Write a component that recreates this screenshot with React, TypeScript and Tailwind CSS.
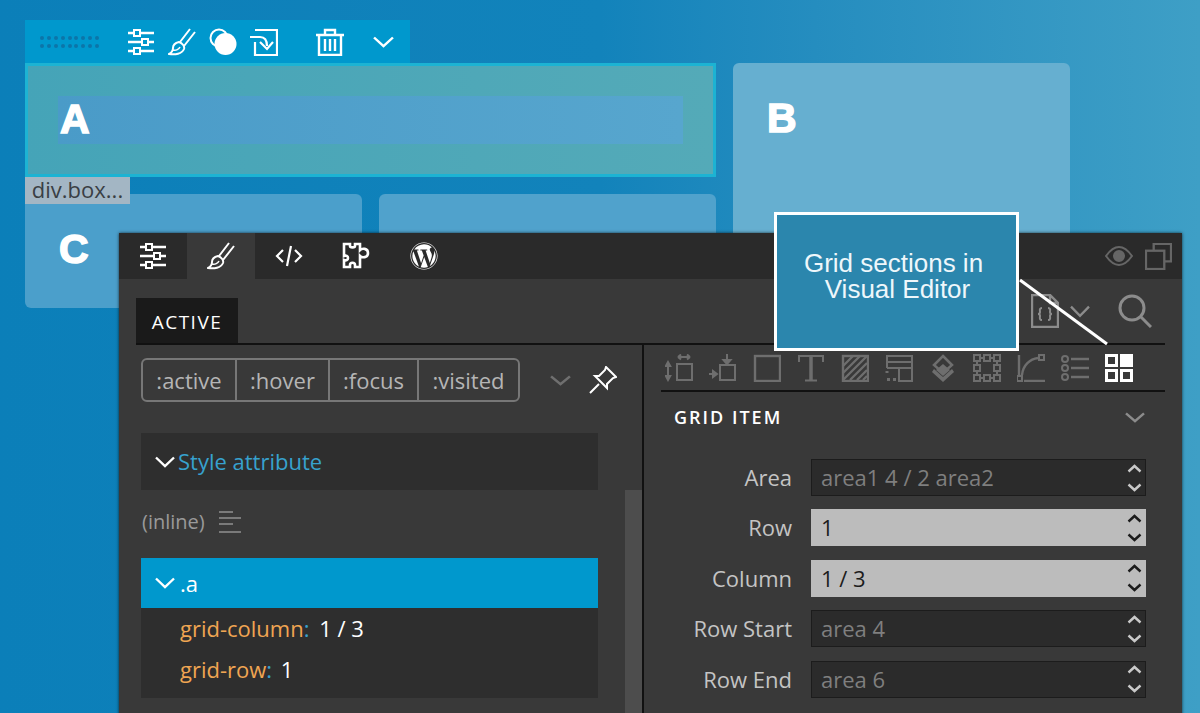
import { FaWordpress } from 'react-icons/fa';

const stroke = { fill: 'none', stroke: 'currentColor', strokeWidth: 2 };

function Sliders({ className }: { className?: string }) {
  return (
    <svg viewBox="0 0 28 28" className={className} {...stroke}>
      <path d="M1 5h6M13 5h14M1 14h14M21 14h6M1 23h6M13 23h14" strokeWidth="2.4" />
      <rect x="7" y="2" width="6" height="6" />
      <rect x="15" y="11" width="6" height="6" />
      <rect x="7" y="20" width="6" height="6" />
    </svg>
  );
}

function Brush({ className }: { className?: string }) {
  return (
    <svg viewBox="0 0 28 28" className={className} {...stroke}>
      <path d="M22 1 12 14M27 4 16 18" />
      <path d="M11 14c-4 1-6 3-6 6 0 3-2 5-4 6 6 1 13 0 15-5 1-3-2-6-5-7Z" />
      <path d="M5 22c3 1 6-1 7-3" strokeWidth="1.5" />
    </svg>
  );
}

function Puzzle({ className }: { className?: string }) {
  return (
    <svg viewBox="0 0 28 28" className={className} fill="none" stroke="currentColor" strokeWidth="2.6">
      <path d="M2 2h6v2c0 2 5 2 5 0V2h5v6c2-2 8-2 8 3s-6 5-8 3v11h-5v-2c0-3-5-3-5 0v2H2v-7c2 1 4 0 4-2s-2-3-4-2Z" />
    </svg>
  );
}

function Chevron({ className }: { className?: string }) {
  return (
    <svg viewBox="0 0 20 12" preserveAspectRatio="none" className={className} fill="none" stroke="currentColor" strokeWidth="2.4">
      <path d="M1 1.5 10 10l9-8.5" />
    </svg>
  );
}

function Spinner() {
  return (
    <svg viewBox="0 0 15 32" className="h-8 w-[15px]" fill="none" stroke="currentColor" strokeWidth="2.4">
      <path d="M1.500 9.500 7.500 4l6 5.500M1.500 22.500 7.500 28l6-5.500" />
    </svg>
  );
}

function ToolIcons() {
  return (
    <div className="flex h-[30px] items-center gap-[16px] text-[#6e6e6e]">
      <svg viewBox="0 0 28 28" className="h-[28px] w-[28px] shrink-0" {...stroke}>
        <path d="M13 3H25M13 3l3-2.500M13 3l3 2.500M25 3l-3-2.500M25 3l-3 2.500M3 8v18M3 8 .8 12h4.400ZM3 26 .8 22h4.400Z" />
        <rect x="12" y="10" width="15" height="16" />
      </svg>
      <svg viewBox="0 0 28 28" className="h-[28px] w-[28px] shrink-0" {...stroke}>
        <path d="M18 0v9M18 10l-3.500-4h7ZM0 20h7M8 20l-4-3v6Z" fill="currentColor" />
        <rect x="11" y="11" width="15" height="15" />
      </svg>
      <svg viewBox="0 0 28 28" className="h-[28px] w-[28px] shrink-0" {...stroke}>
        <rect x="2" y="2" width="25" height="25" strokeWidth="2.400" />
      </svg>
      <svg viewBox="0 0 28 28" className="h-[28px] w-[28px] shrink-0" {...stroke}>
        <path d="M2 8V2h24v6" strokeWidth="2" />
        <path d="M14 2v24" strokeWidth="3.500" />
        <path d="M8 26.500h12" strokeWidth="2" />
      </svg>
      <svg viewBox="0 0 28 28" className="h-[28px] w-[28px] shrink-0" fill="none" stroke="currentColor" strokeWidth="2.400">
        <rect x="2" y="2" width="25" height="25" />
        <path d="M2 12 12 2M2 19 19 2M2 26 26 2M9 26 26 9M16 26l10-10M22 26l4-4" />
      </svg>
      <svg viewBox="0 0 28 28" className="h-[28px] w-[28px] shrink-0" {...stroke}>
        <path d="M2 14V2h25v12M2 8h25M14 14h13v13H14ZM14 14H2" />
        <path d="M2 17v2M2 25.500h3M8 25.500h3" strokeWidth="3" />
      </svg>
      <svg viewBox="0 0 28 28" className="h-[28px] w-[28px] shrink-0" fill="currentColor">
        <path d="M14 2 23 11 14 19 5 11Z" fill="none" stroke="currentColor" strokeWidth="2.500" />
        <path d="M5 15l9 8 9-8 2 3-11 10L3 18Z" />
        <path d="M14 10l7 6-7 6-7-6Z" />
      </svg>
      <svg viewBox="0 0 28 28" className="h-[28px] w-[28px] shrink-0" {...stroke}>
        <path d="M4 7v4M4 17v4M24 7v4M24 17v4M7 4h4M17 4h4M7 24h4M17 24h4" />
        <rect x="1" y="1" width="6" height="6" />
        <rect x="11" y="1" width="6" height="6" />
        <rect x="21" y="1" width="6" height="6" />
        <rect x="1" y="11" width="6" height="6" />
        <rect x="21" y="11" width="6" height="6" />
        <rect x="1" y="21" width="6" height="6" />
        <rect x="11" y="21" width="6" height="6" />
        <rect x="21" y="21" width="6" height="6" />
      </svg>
      <svg viewBox="0 0 28 28" className="h-[28px] w-[28px] shrink-0" {...stroke}>
        <path d="M2 1v22M7 27h21M5 21C6 11 13 5 21 4" strokeWidth="2.400" />
        <rect x="0" y="22" width="5" height="5" />
        <rect x="22" y="1" width="5" height="5" />
      </svg>
      <svg viewBox="0 0 28 28" className="h-[28px] w-[28px] shrink-0" {...stroke}>
        <circle cx="4" cy="5" r="3" />
        <circle cx="4" cy="14" r="3" />
        <circle cx="4" cy="23" r="3" />
        <path d="M10 5h18M10 14h18M10 23h18" strokeWidth="2.400" />
      </svg>
      <svg viewBox="0 0 28 28" className="h-[28px] w-[28px] shrink-0 text-white">
        <path d="M0 0h13v13H0Zm3 3v7h7V3ZM15 0h13v13H15ZM0 15h13v13H0Zm3 3v7h7v-7ZM15 15h13v13H15Zm3 3v7h7v-7Z" fill="currentColor" fillRule="evenodd" />
      </svg>
    </div>
  );
}

function Field({ label, value, active }: { label: string; value: string; active?: boolean }) {
  return (
    <div className="flex h-[37px] items-center">
      <div className="w-[150px] shrink-0 pr-[19px] text-right text-[#c4c4c4]">{label}</div>
      <div
        className={
          active
            ? 'flex h-[37px] w-[335px] items-center justify-between bg-[#bcbcbc] pl-[10px] pr-[4px] text-[#1c1c1c]'
            : 'flex h-[37px] w-[335px] items-center justify-between border border-[#1c1c1c] bg-[#2b2b2b] pl-[9px] pr-[3px] text-[#7f7f7f]'
        }
      >
        <span>{value}</span>
        <span className={active ? 'text-[#1c1c1c]' : 'text-[#c9c9c9]'}>
          <Spinner />
        </span>
      </div>
    </div>
  );
}

export default function App() {
  return (
    <div className="relative h-[713px] w-[1200px] overflow-hidden bg-gradient-to-r from-[#0b7fb9] via-[#1283bb] to-[#3e9fc6] font-['Open_Sans',sans-serif]">
      {/* page under edit */}
      <div className="grid grid-cols-[337px_337px_337px] grid-rows-[114px_114px] gap-x-[17px] gap-y-[17px] pl-[25px] pt-[63px]">
        <div className="col-span-2 flex items-center border-[3px] border-[#1cb3d3] bg-gradient-to-r from-[#45a4b8] to-[#54aab8] px-[30px] py-[30px]">
          <div className="flex h-full w-full items-center bg-gradient-to-r from-[#4a9bc8] to-[#57a6ce] pl-[2px]">
            <span className="font-['Liberation_Sans',sans-serif] text-[41px] font-bold text-white [-webkit-text-stroke:1.5px_white]">A</span>
          </div>
        </div>
        <div className="row-span-2 rounded-[6px] bg-[#66afd0] pl-[34px] pt-[29px]">
          <span className="font-['Liberation_Sans',sans-serif] text-[41px] font-bold leading-[52px] text-white [-webkit-text-stroke:1.5px_white]">B</span>
        </div>
        <div className="rounded-[6px] bg-[#4b9fcb] pl-[34px] pt-[29px]">
          <span className="font-['Liberation_Sans',sans-serif] text-[41px] font-bold leading-[52px] text-white [-webkit-text-stroke:1.5px_white]">C</span>
        </div>
        <div className="rounded-[6px] bg-[#50a2cc]" />
      </div>

      {/* element toolbar */}
      <div className="absolute left-[25px] top-[20px] flex h-[43px] w-[385px] items-center bg-[#0098cd] pl-[15px] text-white">
        <div className="grid grid-cols-[repeat(9,4px)] gap-x-[2.875px] gap-y-[4px]">
          {Array.from({ length: 18 }).map((_, i) => (
            <span key={i} className="h-[4px] w-[4px] rounded-full bg-[#0c75a8]" />
          ))}
        </div>
        <Sliders className="ml-[28px] h-[28px] w-[28px]" />
        <Brush className="ml-[13px] h-[28px] w-[28px]" />
        <svg viewBox="0 0 28 28" className="ml-[13px] h-[28px] w-[28px]">
          <circle cx="10" cy="10" r="8.500" fill="none" stroke="currentColor" strokeWidth="2" />
          <circle cx="16.500" cy="16" r="11" fill="currentColor" />
        </svg>
        <svg viewBox="0 0 28 28" className="ml-[13px] h-[28px] w-[28px]" {...stroke}>
          <path d="M5 2h22v25H5V14M0 9h10c5 0 7 3 7 9" strokeWidth="2.200" />
          <path d="M10 14l7 7 6-7" strokeWidth="2.200" />
        </svg>
        <svg viewBox="0 0 28 28" className="ml-[38px] h-[28px] w-[28px]" {...stroke}>
          <path d="M0 7h28M9 6V2h10v4M3 7v20h22V7M9 11v12M14 11v12M19 11v12" strokeWidth="2.400" />
        </svg>
        <Chevron className="ml-[29px] h-[12px] w-[21px]" />
      </div>

      {/* selected element label */}
      <div className="absolute left-[25px] top-[177px] flex h-[27px] w-[105px] items-center justify-center bg-[#a3b6c4] pb-[2px] text-[22px] text-[#3a3f44]">
        div.box...
      </div>

      {/* editor panel */}
      <div className="absolute left-[119px] top-[233px] h-[500px] w-[1063px] bg-[#393939] text-[22px] shadow-[0_0_3px_rgba(0,0,0,0.7)]">
        <div className="flex h-[46px] items-stretch bg-[#2a2a2a] text-white">
          <div className="flex w-[68px] items-center justify-center">
            <Sliders className="h-[28px] w-[28px]" />
          </div>
          <div className="flex w-[68px] items-center justify-center bg-[#393939]">
            <Brush className="h-[28px] w-[28px]" />
          </div>
          <div className="flex w-[67px] items-center justify-center">
            <svg viewBox="0 0 28 28" className="h-[28px] w-[28px]" fill="none" stroke="currentColor" strokeWidth="2.200">
              <path d="M8 8 2 14l6 6M20 8l6 6-6 6M16 4l-4 20" />
            </svg>
          </div>
          <div className="flex w-[68px] items-center justify-center">
            <Puzzle className="h-[28px] w-[28px]" />
          </div>
          <div className="flex w-[67px] items-center justify-center">
            <FaWordpress className="h-[28px] w-[28px]" />
          </div>
          <div className="ml-auto flex items-center gap-[12px] pr-[10px] text-[#666]">
            <svg viewBox="0 0 28 20" className="h-[20px] w-[28px]" fill="none" stroke="currentColor" strokeWidth="2">
              <path d="M1 10C6 3 10 1 14 1s8 2 13 9c-5 7-9 9-13 9S6 17 1 10Z" />
              <circle cx="14" cy="10" r="5" fill="currentColor" />
            </svg>
            <svg viewBox="0 0 28 28" className="h-[27px] w-[27px]" fill="none" stroke="currentColor" strokeWidth="2.400">
              <path d="M9 8V1h18v18h-7" />
              <rect x="1" y="8" width="19" height="19" />
            </svg>
          </div>
        </div>

        <div className="mx-[17px] flex h-[66px] items-end border-b-2 border-[#111]">
          <div className="flex h-[45px] w-[102px] items-center justify-center bg-[#1a1a1a] pt-[3px] text-[19px] tracking-[1.500px] text-white">
            ACTIVE
          </div>
          <div className="ml-auto flex items-center self-center pr-[13px] text-[#8c8c8c]">
            <svg viewBox="0 0 28 28" className="mr-[11px] h-[14px] w-[14px]" fill="none" stroke="currentColor" strokeWidth="4">
              <circle cx="14" cy="8" r="6" />
              <circle cx="14" cy="21" r="6" />
            </svg>
            <svg viewBox="0 0 28 34" className="h-[34px] w-[28px]" fill="none" stroke="currentColor" strokeWidth="2.400">
              <path d="M1 1h18l8 8v24H1ZM19 1v8h8" />
              <path d="M11 14c-3 0-2 3-2 4s-1 2-2 2c1 0 2 1 2 2s-1 4 2 4M17 14c3 0 2 3 2 4s1 2 2 2c-1 0-2 1-2 2s1 4-2 4" strokeWidth="2" />
            </svg>
            <Chevron className="ml-[11px] h-[13px] w-[20px]" />
            <svg viewBox="0 0 34 34" className="ml-[28px] h-[34px] w-[34px]" fill="none" stroke="currentColor" strokeWidth="3">
              <circle cx="14" cy="14" r="12" />
              <path d="m23 23 10 10" />
            </svg>
          </div>
        </div>

        <div className="flex">
          <div className="relative h-[400px] w-[525px] shrink-0 border-r-2 border-[#111] pl-[22px] pt-[13px]">
            <div className="absolute bottom-0 right-0 top-[145px] w-[17px] bg-[#4d4d4d]" />
            <div className="flex items-center">
              <div className="flex h-[44px] shrink-0 items-center rounded-[6px] border-2 border-[#777] text-[#b5b5b5]">
                <span className="flex h-full w-[94px] items-center justify-center border-r-2 border-[#777]">:active</span>
                <span className="flex h-full w-[93px] items-center justify-center border-r-2 border-[#777]">:hover</span>
                <span className="flex h-full w-[89px] items-center justify-center border-r-2 border-[#777]">:focus</span>
                <span className="flex h-full w-[99px] items-center justify-center">:visited</span>
              </div>
              <Chevron className="ml-[30px] h-[11px] w-[21px] shrink-0 text-[#6f6f6f]" />
              <svg viewBox="0 0 28 28" className="ml-[18px] h-[28px] w-[28px] shrink-0 text-white" fill="none" stroke="currentColor" strokeWidth="2">
                <path d="M1 27 10 18M17 1 27 11 24 12 18 18 18 22 6 10 10 10 16 4Z" />
              </svg>
            </div>

            <div className="mt-[31px] flex h-[57px] w-[457px] items-center bg-[#2e2e2e] pl-[14px] text-[#37a2cf]">
              <Chevron className="mr-[3px] h-[12px] w-[20px] text-white" />
              Style attribute
            </div>

            <div className="mt-[17px] flex h-[30px] items-center pl-[1px] text-[20px] text-[#9a9a9a]">
              (inline)
              <svg viewBox="0 0 24 24" className="ml-[13px] h-[24px] w-[24px] text-[#7a7a7a]" fill="none" stroke="currentColor" strokeWidth="2">
                <path d="M1 2h14M1 8h22M1 14h14M1 22h22" />
              </svg>
            </div>

            <div className="mt-[21px] w-[457px]">
              <div className="flex h-[50px] items-center bg-[#0098cd] pl-[14px] text-white">
                <Chevron className="mr-[5px] h-[12px] w-[20px]" />
                .a
              </div>
              <div className="h-[90px] bg-[#2e2e2e] pl-[39px] leading-[41px]">
                <div>
                  <span className="text-[#f0a552]">grid-column</span>
                  <span className="text-[#37a2cf]">:</span>
                  <span className="ml-[4px] text-white"> 1 / 3</span>
                </div>
                <div>
                  <span className="text-[#f0a552]">grid-row</span>
                  <span className="text-[#37a2cf]">:</span>
                  <span className="ml-[3px] text-white"> 1</span>
                </div>
              </div>
            </div>
          </div>

          <div className="flex-1 pl-[17px] pr-[17px]">
            <div className="h-[47px] border-b-2 border-[#111] pl-[4px] pt-[8px]">
              <ToolIcons />
            </div>
            <div className="flex h-[50px] items-center justify-between pl-[13px] pr-[20px] text-[18px] tracking-[2px] text-white">
              <span className="font-semibold">GRID ITEM</span>
              <Chevron className="h-[11px] w-[20px] text-[#8c8c8c]" />
            </div>
            <div className="mt-[17px] flex flex-col gap-[13.400px]">
              <Field label="Area" value="area1 4 / 2 area2" />
              <Field label="Row" value="1" active />
              <Field label="Column" value="1 / 3" active />
              <Field label="Row Start" value="area 4" />
              <Field label="Row End" value="area 6" />
            </div>
          </div>
        </div>
      </div>

      {/* callout */}
      <svg viewBox="0 0 120 80" className="absolute left-[1005px] top-[275px] h-[80px] w-[120px] text-white">
        <path d="M15 5 102 69" fill="none" stroke="currentColor" strokeWidth="3" />
      </svg>
      <div className="absolute left-[774px] top-[212px] h-[139px] w-[245px] border-[3px] border-white bg-[#2b86ad] pr-[6px] pt-[35px] text-center font-['Liberation_Sans',sans-serif] text-[26px] leading-[26px] text-[#eef7fb]">
        Grid sections in
        <br />
        <span className="pl-[8px]">Visual Editor</span>
      </div>
    </div>
  );
}
